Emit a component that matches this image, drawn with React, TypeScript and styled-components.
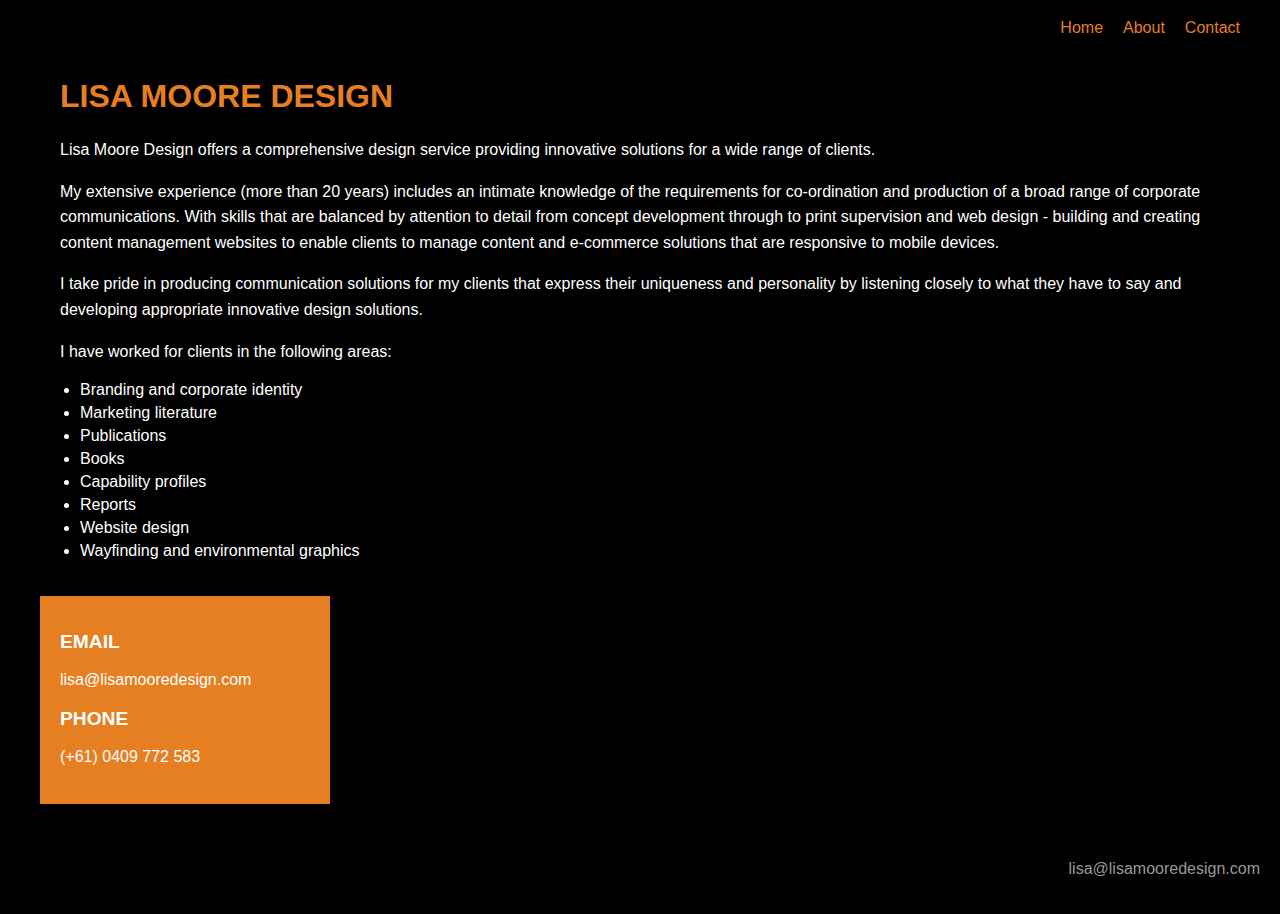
import React from "react";
import styled, { createGlobalStyle } from "styled-components";

const Global = createGlobalStyle`
  html, body { margin: 0; padding: 0; background: #000; }
  body { font-family: "Liberation Sans", Arial, Helvetica, sans-serif; color: #fff; font-size: 16px; }
`;

const Page = styled.div`
  background: #000;
  min-height: 914px;
  display: flex;
  flex-direction: column;
`;

const Nav = styled.nav`
  display: flex;
  justify-content: flex-end;
  gap: 20px;
  padding: 19px 40px 0;
`;

const NavLink = styled.a`
  color: #e67e22;
  text-decoration: none;
  font-size: 16px;
  line-height: 18px;
`;

const Main = styled.main`
  padding: 0 60px;
`;

const Title = styled.h1`
  margin: 40px 0 22px;
  color: #e67e22;
  font-size: 32px;
  line-height: 38px;
  font-weight: 700;
`;

const Para = styled.p<{ $mb?: number }>`
  margin: 0 0 ${(p) => (p.$mb ?? 16)}px;
  font-size: 16px;
  line-height: 25.6px;
`;

const List = styled.ul`
  margin: 0;
  padding-left: 20px;
  li {
    font-size: 16px;
    line-height: 23px;
  }
`;

const ContactBox = styled.section`
  margin: 34px 0 0 40px;
  width: 250px;
  background: #e67e22;
  padding: 20px;
`;

const BoxHeading = styled.h3<{ $mt?: number }>`
  margin: ${(p) => (p.$mt ?? 0)}px 0 14px;
  font-size: 19.2px;
  line-height: 23px;
  font-weight: 700;
`;

const Footer = styled.footer`
  margin-top: 56px;
  padding: 0 20px;
  display: flex;
  justify-content: flex-end;
  color: #999;
  font-size: 16px;
  line-height: 18px;
`;

const items = [
  "Branding and corporate identity",
  "Marketing literature",
  "Publications",
  "Books",
  "Capability profiles",
  "Reports",
  "Website design",
  "Wayfinding and environmental graphics",
];

export default function App() {
  return (
    <Page>
      <Global />
      <Nav>
        <NavLink href="#">Home</NavLink>
        <NavLink href="#">About</NavLink>
        <NavLink href="#">Contact</NavLink>
      </Nav>
      <Main>
        <Title>LISA MOORE DESIGN</Title>
        <Para>Lisa Moore Design offers a comprehensive design service providing innovative solutions for a wide range of clients.</Para>
        <Para>
          My extensive experience (more than 20 years) includes an intimate knowledge of the requirements for co-ordination and production of a broad range of corporate communications. With skills that are balanced by attention to detail from concept development through to print supervision and web design - building and creating content management websites to enable clients to manage content and e-commerce solutions that are responsive to mobile devices.
        </Para>
        <Para>
          I take pride in producing communication solutions for my clients that express their uniqueness and personality by listening closely to what they have to say and developing appropriate innovative design solutions.
        </Para>
        <Para $mb={14}>I have worked for clients in the following areas:</Para>
        <List>
          {items.map((i) => (
            <li key={i}>{i}</li>
          ))}
        </List>
      </Main>
      <ContactBox>
        <BoxHeading $mt={14}>EMAIL</BoxHeading>
        <Para $mb={14}>lisa@lisamooredesign.com</Para>
        <BoxHeading>PHONE</BoxHeading>
        <Para $mb={15}>(+61) 0409 772 583</Para>
      </ContactBox>
      <Footer>lisa@lisamooredesign.com</Footer>
    </Page>
  );
}
